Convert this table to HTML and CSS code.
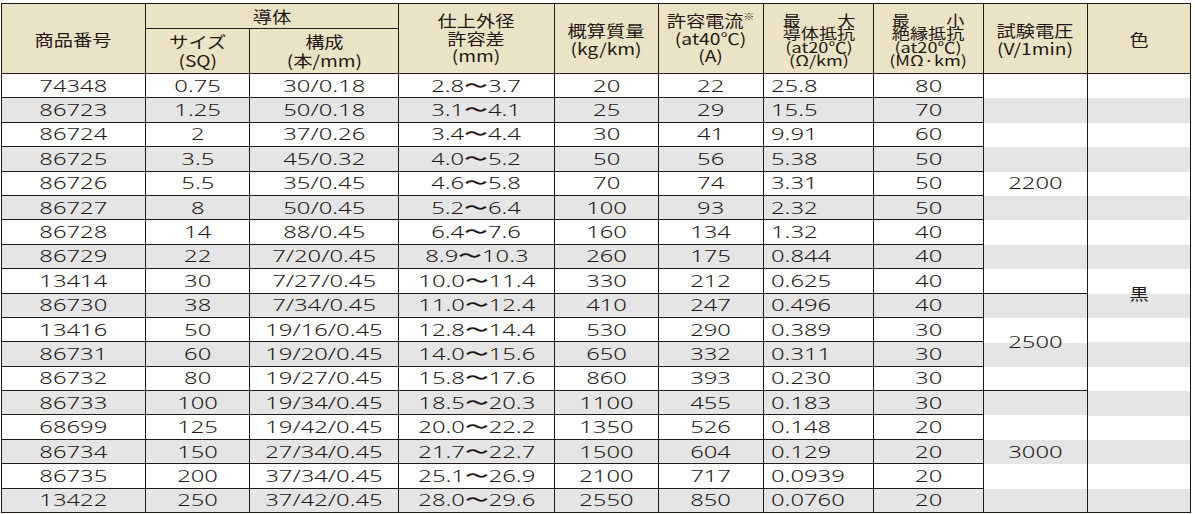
FILE: index.html
```html
<!DOCTYPE html>
<html lang="ja">
<head>
<meta charset="utf-8">
<title>電線仕様表</title>
<link rel="stylesheet" href="styles.css">
</head>
<body>
<div class="tbl">
  <div class="h r2"><span class="t">商品番号</span></div>
  <div class="h c2"><span class="t">導体</span></div>
  <div class="h r2"><span class="t l3">仕上外径<br>許容差<br>(mm)</span></div>
  <div class="h r2"><span class="t">概算質量<br>(kg/km)</span></div>
  <div class="h r2"><span class="t l3">許容電流<sup class="k">※</sup><br>(at40℃)<br>(A)</span></div>
  <div class="h r2"><span class="t sq"><span class="jb"><span class="jl"><span>最</span><span>大</span></span><span>導体抵抗</span></span><span>(at20℃)</span><span>(Ω/km)</span></span></div>
  <div class="h r2"><span class="t sq"><span class="jb"><span class="jl"><span>最</span><span>小</span></span><span>絶縁抵抗</span></span><span>(at20℃)</span><span>(MΩ·km)</span></span></div>
  <div class="h r2"><span class="t">試験電圧<br>(V/1min)</span></div>
  <div class="h r2"><span class="t">色</span></div>
  <div class="h"><span class="t l2">サイズ<br>(SQ)</span></div>
  <div class="h"><span class="t l2">構成<br>(本/mm)</span></div>

  <div class="row">
    <div><span class="n">74348</span></div><div><span class="n">0.75</span></div><div><span class="n">30/0.18</span></div><div><span class="n">2.8〜3.7</span></div><div><span class="n">20</span></div><div><span class="n">22</span></div><div class="L"><span class="n">25.8</span></div><div><span class="n">80</span></div>
    <div class="m s9 wf"><span class="n">2200</span></div>
    <div class="m s18 wf"><span class="t">黒</span></div>
  </div>
  <div class="row g">
    <div><span class="n">86723</span></div><div><span class="n">1.25</span></div><div><span class="n">50/0.18</span></div><div><span class="n">3.1〜4.1</span></div><div><span class="n">25</span></div><div><span class="n">29</span></div><div class="L"><span class="n">15.5</span></div><div><span class="n">70</span></div>
  </div>
  <div class="row">
    <div><span class="n">86724</span></div><div><span class="n">2</span></div><div><span class="n">37/0.26</span></div><div><span class="n">3.4〜4.4</span></div><div><span class="n">30</span></div><div><span class="n">41</span></div><div class="L"><span class="n">9.91</span></div><div><span class="n">60</span></div>
  </div>
  <div class="row g">
    <div><span class="n">86725</span></div><div><span class="n">3.5</span></div><div><span class="n">45/0.32</span></div><div><span class="n">4.0〜5.2</span></div><div><span class="n">50</span></div><div><span class="n">56</span></div><div class="L"><span class="n">5.38</span></div><div><span class="n">50</span></div>
  </div>
  <div class="row">
    <div><span class="n">86726</span></div><div><span class="n">5.5</span></div><div><span class="n">35/0.45</span></div><div><span class="n">4.6〜5.8</span></div><div><span class="n">70</span></div><div><span class="n">74</span></div><div class="L"><span class="n">3.31</span></div><div><span class="n">50</span></div>
  </div>
  <div class="row g">
    <div><span class="n">86727</span></div><div><span class="n">8</span></div><div><span class="n">50/0.45</span></div><div><span class="n">5.2〜6.4</span></div><div><span class="n">100</span></div><div><span class="n">93</span></div><div class="L"><span class="n">2.32</span></div><div><span class="n">50</span></div>
  </div>
  <div class="row">
    <div><span class="n">86728</span></div><div><span class="n">14</span></div><div><span class="n">88/0.45</span></div><div><span class="n">6.4〜7.6</span></div><div><span class="n">160</span></div><div><span class="n">134</span></div><div class="L"><span class="n">1.32</span></div><div><span class="n">40</span></div>
  </div>
  <div class="row g">
    <div><span class="n">86729</span></div><div><span class="n">22</span></div><div><span class="n">7/20/0.45</span></div><div><span class="n">8.9〜10.3</span></div><div><span class="n">260</span></div><div><span class="n">175</span></div><div class="L"><span class="n">0.844</span></div><div><span class="n">40</span></div>
  </div>
  <div class="row">
    <div><span class="n">13414</span></div><div><span class="n">30</span></div><div><span class="n">7/27/0.45</span></div><div><span class="n">10.0〜11.4</span></div><div><span class="n">330</span></div><div><span class="n">212</span></div><div class="L"><span class="n">0.625</span></div><div><span class="n">40</span></div>
  </div>
  <div class="row g">
    <div><span class="n">86730</span></div><div><span class="n">38</span></div><div><span class="n">7/34/0.45</span></div><div><span class="n">11.0〜12.4</span></div><div><span class="n">410</span></div><div><span class="n">247</span></div><div class="L"><span class="n">0.496</span></div><div><span class="n">40</span></div>
    <div class="m s4 gf"><span class="n">2500</span></div>
  </div>
  <div class="row">
    <div><span class="n">13416</span></div><div><span class="n">50</span></div><div><span class="n">19/16/0.45</span></div><div><span class="n">12.8〜14.4</span></div><div><span class="n">530</span></div><div><span class="n">290</span></div><div class="L"><span class="n">0.389</span></div><div><span class="n">30</span></div>
  </div>
  <div class="row g">
    <div><span class="n">86731</span></div><div><span class="n">60</span></div><div><span class="n">19/20/0.45</span></div><div><span class="n">14.0〜15.6</span></div><div><span class="n">650</span></div><div><span class="n">332</span></div><div class="L"><span class="n">0.311</span></div><div><span class="n">30</span></div>
  </div>
  <div class="row">
    <div><span class="n">86732</span></div><div><span class="n">80</span></div><div><span class="n">19/27/0.45</span></div><div><span class="n">15.8〜17.6</span></div><div><span class="n">860</span></div><div><span class="n">393</span></div><div class="L"><span class="n">0.230</span></div><div><span class="n">30</span></div>
  </div>
  <div class="row g">
    <div><span class="n">86733</span></div><div><span class="n">100</span></div><div><span class="n">19/34/0.45</span></div><div><span class="n">18.5〜20.3</span></div><div><span class="n">1100</span></div><div><span class="n">455</span></div><div class="L"><span class="n">0.183</span></div><div><span class="n">30</span></div>
    <div class="m s5 gf"><span class="n">3000</span></div>
  </div>
  <div class="row">
    <div><span class="n">68699</span></div><div><span class="n">125</span></div><div><span class="n">19/42/0.45</span></div><div><span class="n">20.0〜22.2</span></div><div><span class="n">1350</span></div><div><span class="n">526</span></div><div class="L"><span class="n">0.148</span></div><div><span class="n">20</span></div>
  </div>
  <div class="row g">
    <div><span class="n">86734</span></div><div><span class="n">150</span></div><div><span class="n">27/34/0.45</span></div><div><span class="n">21.7〜22.7</span></div><div><span class="n">1500</span></div><div><span class="n">604</span></div><div class="L"><span class="n">0.129</span></div><div><span class="n">20</span></div>
  </div>
  <div class="row">
    <div><span class="n">86735</span></div><div><span class="n">200</span></div><div><span class="n">37/34/0.45</span></div><div><span class="n">25.1〜26.9</span></div><div><span class="n">2100</span></div><div><span class="n">717</span></div><div class="L"><span class="n">0.0939</span></div><div><span class="n">20</span></div>
  </div>
  <div class="row g">
    <div><span class="n">13422</span></div><div><span class="n">250</span></div><div><span class="n">37/42/0.45</span></div><div><span class="n">28.0〜29.6</span></div><div><span class="n">2550</span></div><div><span class="n">850</span></div><div class="L"><span class="n">0.0760</span></div><div><span class="n">20</span></div>
  </div>
</div>
</body>
</html>
```

FILE: styles.css
```css
body {
  margin: 0;
  background: #fff;
}

.tbl {
  display: grid;
  width: max-content;
  margin: 3px 0 0 1px;
  padding: 1px;
  gap: 1px;
  background: #231815;
  grid-template-columns: 143px 103px 148px 155px 103px 104px 109px 109px 103px 102px;
  grid-template-rows: 24px 44px repeat(18, 23.4px);
}

.h,
.row > div {
  display: flex;
  align-items: center;
  justify-content: center;
  overflow: hidden;
}

.tbl > .row {
  display: contents;
}

.row > div {
  background: #fff;
}

.row.g > div {
  background: #e5e5e5;
}

.h {
  background: #ebe3c5;
  color: #231815;
  font-family: "Noto Sans CJK JP", sans-serif;
  font-size: 16px;
}

.r2 {
  grid-row: span 2;
}

.c2 {
  grid-column: span 2;
}

.t {
  display: inline-block;
  transform: scaleX(1.2);
  text-align: center;
  line-height: 18px;
  white-space: nowrap;
  font-family: "Noto Sans CJK JP", sans-serif;
  font-size: 16px;
  color: #231815;
}

.t.l3 {
  line-height: 17.5px;
}

.t.l2 {
  line-height: 19.5px;
}

.k {
  font-size: 9px;
  line-height: 0;
  vertical-align: 7px;
}

.t.sq {
  display: inline-flex;
  flex-direction: column;
  align-items: center;
  font-size: 14.5px;
  line-height: 13.4px;
  transform: scaleX(1.25);
  padding-top: 2px;
}

.jb {
  display: inline-flex;
  flex-direction: column;
}

.jl {
  display: flex;
  justify-content: space-between;
}

.n {
  display: inline-block;
  font-family: "Noto Sans", "DejaVu Sans", sans-serif;
  font-weight: 300;
  font-size: 17px;
  line-height: 20px;
  transform: scaleX(1.4);
  color: #231815;
  white-space: nowrap;
}

.row > div.L {
  justify-content: flex-start;
  padding-left: 7px;
}

.L .n {
  transform-origin: left center;
}

.s4 { grid-row: span 4; }
.s5 { grid-row: span 5; }
.s9 { grid-row: span 9; }
.s18 { grid-row: span 18; }

.row > div.wf {
  background: repeating-linear-gradient(to bottom, #fff 0 24.4px, #e5e5e5 24.4px 48.8px);
}

.row > div.gf {
  background: repeating-linear-gradient(to bottom, #e5e5e5 0 24.4px, #fff 24.4px 48.8px);
}

.m .t {
  font-size: 16px;
}
```
